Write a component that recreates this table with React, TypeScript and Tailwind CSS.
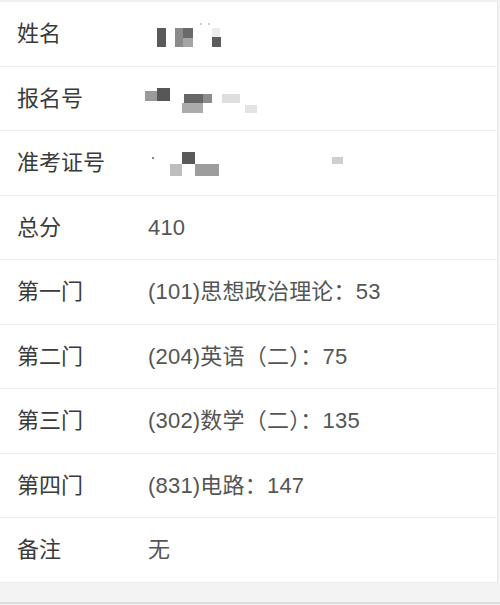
import React from "react";

type R = { x: number; y: number; w: number; h: number; c: string };

const Mosaic = ({ rects, w, h }: { rects: R[]; w: number; h: number }) => (
  <svg width={w} height={h} viewBox={`0 0 ${w} ${h}`} className="block">
    {rects.map((r, i) => (
      <rect key={i} x={r.x} y={r.y} width={r.w} height={r.h} fill={r.c} />
    ))}
  </svg>
);

const nameRects: R[] = [
  { x: 12, y: 26, w: 9, h: 19, c: "#5a5a5a" },
  { x: 30, y: 26, w: 8, h: 19, c: "#8a8a8a" },
  { x: 38, y: 26, w: 10, h: 10, c: "#6a6a6a" },
  { x: 38, y: 36, w: 10, h: 9, c: "#a5a5a5" },
  { x: 67, y: 26, w: 8, h: 9, c: "#ececec" },
  { x: 67, y: 35, w: 9, h: 10, c: "#5c5c5c" },
  { x: 55, y: 21, w: 2, h: 2, c: "#cfcfcf" },
  { x: 63, y: 21, w: 2, h: 2, c: "#cfcfcf" },
];
const regRects: R[] = [
  { x: 0, y: 24, w: 12, h: 10, c: "#9a9a9a" },
  { x: 12, y: 21, w: 13, h: 13, c: "#575757" },
  { x: 39, y: 27, w: 19, h: 9, c: "#666666" },
  { x: 58, y: 27, w: 9, h: 9, c: "#8c8c8c" },
  { x: 37, y: 36, w: 21, h: 10, c: "#ababab" },
  { x: 77, y: 27, w: 18, h: 9, c: "#dedede" },
  { x: 100, y: 38, w: 12, h: 8, c: "#e3e3e3" },
];
const ticketRects: R[] = [
  { x: 7, y: 26, w: 2, h: 2, c: "#888888" },
  { x: 37, y: 21, w: 13, h: 12, c: "#5a5a5a" },
  { x: 25, y: 33, w: 12, h: 12, c: "#bdbdbd" },
  { x: 50, y: 33, w: 24, h: 12, c: "#9d9d9d" },
  { x: 187, y: 26, w: 11, h: 7, c: "#cfcfcf" },
];

const rows: { label: string; value?: string; mosaic?: R[] }[] = [
  { label: "姓名", mosaic: nameRects },
  { label: "报名号", mosaic: regRects },
  { label: "准考证号", mosaic: ticketRects },
  { label: "总分", value: "410" },
  { label: "第一门", value: "(101)思想政治理论：53" },
  { label: "第二门", value: "(204)英语（二）：75" },
  { label: "第三门", value: "(302)数学（二）：135" },
  { label: "第四门", value: "(831)电路：147" },
  { label: "备注", value: "无" },
];

export default function App() {
  return (
    <div
      className="w-[500px] h-[605px] bg-[#f3f3f3] flex flex-col overflow-hidden"
      style={{ fontFamily: '"Liberation Sans", "Noto Sans CJK SC", sans-serif' }}
    >
      <div className="h-[2px] shrink-0 bg-[#f0f0f0]" />
      <div className="bg-white border-r border-[#e8e8e8] w-[498px] flex flex-col">
        {rows.map((r, i) => (
          <div
            key={i}
            className="h-[64.5px] flex items-center border-b border-[#eeeeee] shrink-0"
          >
            <div className="w-[145px] pl-[17px] text-[22px] text-[#3a3a3a]">{r.label}</div>
            {r.mosaic ? (
              <div className="self-stretch flex-1">
                <Mosaic rects={r.mosaic} w={240} h={64} />
              </div>
            ) : (
              <div className="pl-[3px] text-[22px] tracking-[0.2px] text-[#555555]">{r.value}</div>
            )}
          </div>
        ))}
      </div>
      <div className="flex-1 bg-[#f3f3f3]" />
      <div className="h-[2px] bg-[#dddddd] shrink-0" />
      <div className="h-[1px] bg-[#f3f3f3] shrink-0" />
    </div>
  );
}
